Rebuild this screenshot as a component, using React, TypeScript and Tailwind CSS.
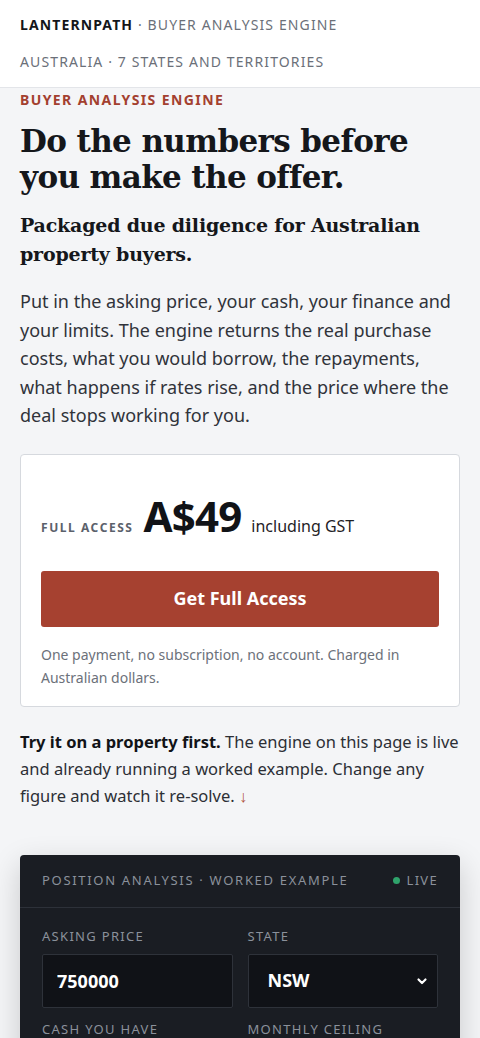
import React, { useState } from "react";

const SANS = "font-['Noto_Sans','Open_Sans',sans-serif]";

function Field({ label, children }: { label: string; children: React.ReactNode }) {
  return (
    <div className="flex flex-col">
      <div className="mb-[7px] text-[13px] uppercase tracking-[0.1em] text-[#8b919b]">{label}</div>
      {children}
    </div>
  );
}

export default function App() {
  const [price, setPrice] = useState("750000");
  const [state, setState] = useState("NSW");

  return (
    <div className={`${SANS} min-h-screen bg-[#f4f5f7] text-[#1b1d21]`}>
      {/* Top bar */}
      <header className="border-b border-[#e3e5e9] bg-white px-5 pt-[14px] pb-[14px]">
        <div className="text-[14px] leading-[22px] tracking-[0.08em] text-[#6b7079]">
          <span className="font-bold text-[#14161a]">LANTERNPATH</span> · BUYER ANALYSIS ENGINE
        </div>
        <div className="mt-[15px] text-[14px] leading-[22px] tracking-[0.08em] text-[#6b7079]">
          AUSTRALIA · 7 STATES AND TERRITORIES
        </div>
      </header>

      <main className="px-5">
        <div className="pt-[1px] text-[14px] font-bold leading-[22px] tracking-[0.1em] text-[#a3402f]">
          BUYER ANALYSIS ENGINE
        </div>
        <h1 className="mt-[12px] font-['DejaVu_Serif','Liberation_Serif',serif] text-[31px] font-bold leading-[36px] tracking-[-0.02em] text-[#15171b]">
          Do the numbers before you make the offer.
        </h1>
        <h2 className="mt-[16px] font-['DejaVu_Serif','Liberation_Serif',serif] text-[19px] font-bold leading-[29px] tracking-[-0.01em] text-[#15171b]">
          Packaged due diligence for Australian property buyers.
        </h2>
        <p className="mt-[18px] text-[18px] leading-[28.5px] text-[#30333a]">
          Put in the asking price, your cash, your finance and your limits. The engine returns the real purchase
          costs, what you would borrow, the repayments, what happens if rates rise, and the price where the deal
          stops working for you.
        </p>

        {/* Pricing card */}
        <section className="mt-[24px] rounded-[4px] border border-[#d6d9de] bg-white px-5 pt-[39px] pb-[17px]">
          <div className="flex items-baseline gap-[10px]">
            <span className="text-[12px] font-bold tracking-[0.13em] text-[#5b616b]">FULL ACCESS</span>
            <span className="text-[42px] font-bold leading-[44px] tracking-[-0.02em] text-[#111317]">A$49</span>
            <span className="text-[16px] text-[#1f2226]">including GST</span>
          </div>
          <button className="mt-[33px] flex h-[56px] w-full items-center justify-center rounded-[3px] bg-[#a64130] text-[18px] font-bold text-white">
            Get Full Access
          </button>
          <p className="mt-[16px] text-[14px] leading-[23px] text-[#6c717a]">
            One payment, no subscription, no account. Charged in Australian dollars.
          </p>
        </section>

        <p className="mt-[21px] text-[16.5px] leading-[27px] text-[#2c2f35]">
          <strong className="font-bold text-[#111317]">Try it on a property first.</strong> The engine on this page is
          live and already running a worked example. Change any figure and watch it re-solve.{" "}
          <span className="text-[#b0533f]">↓</span>
        </p>

        {/* Engine panel */}
        <section className="mt-[46px] overflow-hidden rounded-[4px] bg-[#1a1d23] shadow-[0_10px_30px_rgba(0,0,0,0.18)]">
          <div className="flex items-center justify-between border-b border-[#2d3139] px-[22px] pt-[16px] pb-[17px]">
            <span className="text-[13px] tracking-[0.13em] text-[#8b919b]">POSITION ANALYSIS · WORKED EXAMPLE</span>
            <span className="flex items-center gap-[7px] text-[13px] tracking-[0.1em] text-[#8b919b]">
              <span className="h-[7px] w-[7px] rounded-full bg-[#2fa36b]" />
              LIVE
            </span>
          </div>
          <div className="grid grid-cols-2 gap-x-[15px] gap-y-[12px] px-[22px] pt-[19px] pb-[20px]">
            <Field label="Asking price">
              <input
                value={price}
                onChange={(e) => setPrice(e.target.value)}
                className="h-[54px] w-full rounded-[2px] border border-[#2e323a] bg-[#101217] px-[14px] text-[18px] font-bold text-white outline-none"
              />
            </Field>
            <Field label="State">
              <div className="relative">
                <select
                  value={state}
                  onChange={(e) => setState(e.target.value)}
                  className="h-[54px] w-full appearance-none rounded-[2px] border border-[#2e323a] bg-[#101217] px-[19px] text-[18px] font-bold text-white outline-none"
                >
                  {["NSW", "VIC", "QLD", "WA", "SA", "TAS", "ACT", "NT"].map((s) => (
                    <option key={s}>{s}</option>
                  ))}
                </select>
                <svg
                  className="pointer-events-none absolute right-[10px] top-1/2 -translate-y-1/2"
                  width="12"
                  height="12"
                  viewBox="0 0 12 12"
                  fill="none"
                  stroke="white"
                  strokeWidth="2.2"
                  strokeLinecap="round"
                  strokeLinejoin="round"
                >
                  <path d="M2.5 4.5 6 8l3.5-3.5" />
                </svg>
              </div>
            </Field>
            <Field label="Cash you have">
              <input
                defaultValue="150000"
                className="h-[54px] w-full rounded-[2px] border border-[#2e323a] bg-[#101217] px-[14px] text-[18px] font-bold text-white outline-none"
              />
            </Field>
            <Field label="Monthly ceiling">
              <input
                defaultValue="3800"
                className="h-[54px] w-full rounded-[2px] border border-[#2e323a] bg-[#101217] px-[14px] text-[18px] font-bold text-white outline-none"
              />
            </Field>
          </div>
        </section>
        <div className="h-10" />
      </main>
    </div>
  );
}
